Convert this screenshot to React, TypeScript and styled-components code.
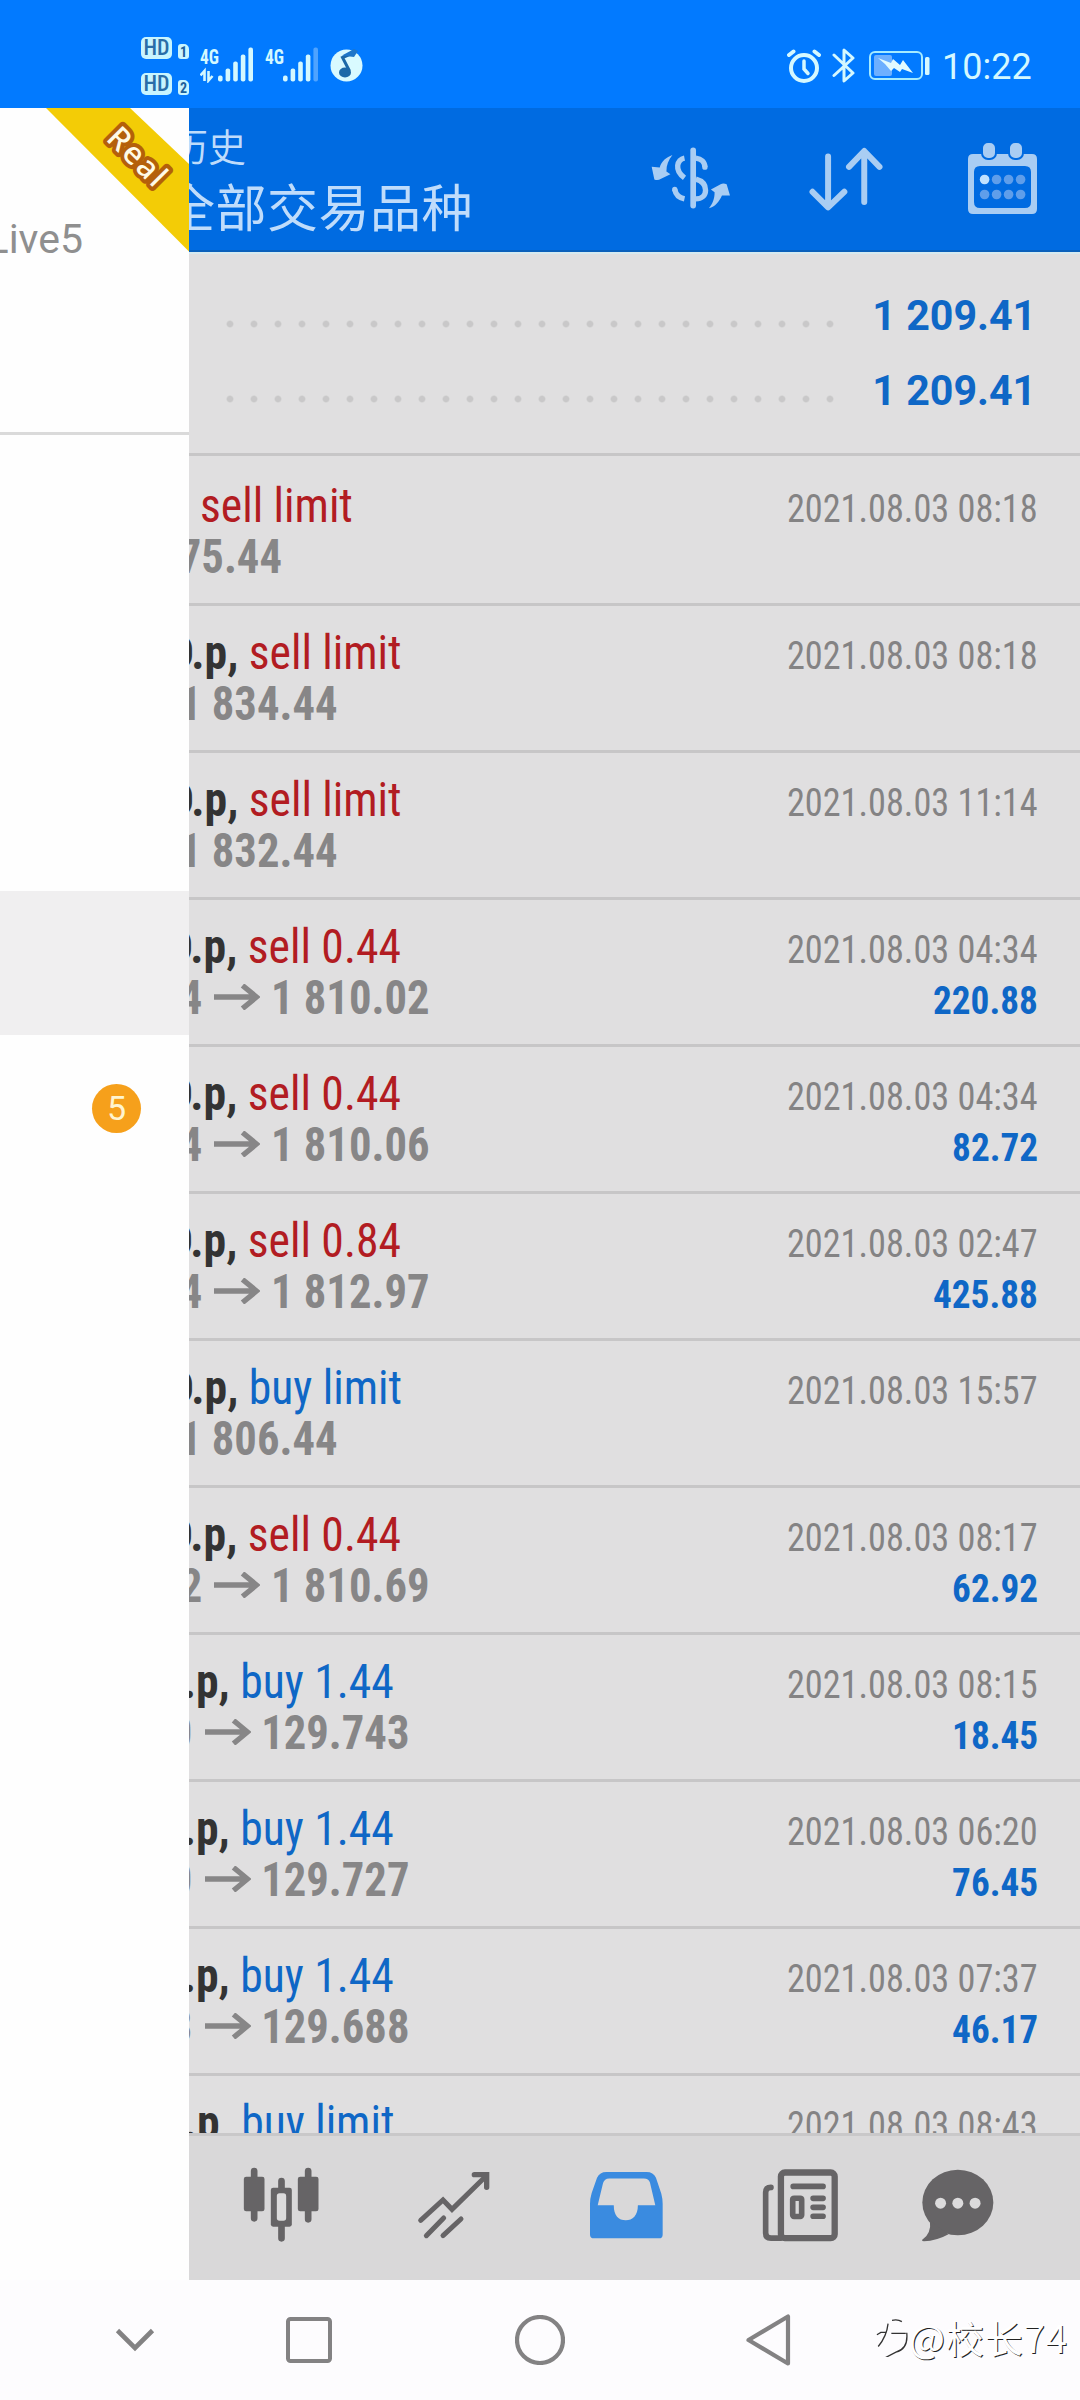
import React from "react";
import styled, { createGlobalStyle } from "styled-components";

const roboto = `Roboto, "Noto Sans CJK SC", sans-serif`;
const condensed = `"Roboto Condensed", Roboto, "Noto Sans CJK SC", sans-serif`;
const cjk = `"Noto Sans CJK SC", sans-serif`;

const RED = "#b21c22";
const BLUE = "#0f67c6";

const GlobalStyle = createGlobalStyle`
  * { box-sizing: border-box; }
  body { margin: 0; background: #fdfcfe; }
  svg { display: block; flex: none; }
`;

const Phone = styled.div`
  width: 1080px;
  height: 2400px;
  display: flex;
  flex-direction: column;
  overflow: hidden;
  font-family: ${roboto};
`;

/* ---------- status bar ---------- */

const StatusBar = styled.div`
  height: 108px;
  padding: 37px 48px 0 141px;
  display: flex;
  align-items: flex-start;
  background: #027aff;
  color: #d4f8ff;
`;

const SimStack = styled.div`
  display: flex;
  flex-direction: column;
  gap: 14px;
  width: 48px;
`;

const SimRow = styled.div`
  display: flex;
  justify-content: space-between;
  align-items: flex-end;
  height: 22px;
`;

const HdBadge = styled.span`
  width: 31px;
  height: 22px;
  border-radius: 5px;
  background: #c8f5ff;
  color: #2a6ea8;
  font: 500 22px/22px ${condensed};
  text-align: center;
`;

const SimBadge = styled.span`
  width: 11px;
  height: 15px;
  border-radius: 3px 5px 3px 3px;
  background: #c8f5ff;
  color: #1b5f9c;
  font: 700 14px/16px ${condensed};
  text-align: center;
`;

const StatusIcon = styled.div<{ $top: number; $left: number }>`
  margin: ${(p) => p.$top}px 0 0 ${(p) => p.$left}px;
`;

const Clock = styled.span`
  margin-left: 12px;
  padding-top: 9px;
  width: 90px;
  font-size: 36px;
  line-height: 42px;
  white-space: nowrap;
`;

const Push = styled.div`
  flex: 1;
`;

/* ---------- body ---------- */

const Body = styled.div`
  display: flex;
  height: 2172px;
`;

const Drawer = styled.aside`
  width: 189px;
  background: #fefefe;
  display: flex;
  flex-direction: column;
`;

const DrawerHeader = styled.div`
  position: relative;
  height: 327px;
  border-bottom: 3px solid #dadada;
  padding-top: 107px;
  overflow: hidden;
`;

const Server = styled.div`
  display: flex;
  justify-content: flex-end;
  width: 83px;
  color: #8f8f8f;
  font-size: 41px;
  line-height: 48px;
`;

const Ribbon = styled.svg`
  position: absolute;
  top: 0;
  left: 0;
`;

const RibbonText = styled.text`
  font: 500 31px "Noto Sans", sans-serif;
  letter-spacing: 2px;
  fill: #fffbe6;
  stroke: #b4600a;
  stroke-width: 8px;
  stroke-linejoin: round;
  paint-order: stroke;
`;

const DrawerMenu = styled.div`
  display: flex;
  flex-direction: column;
  padding-top: 456px;
`;

const DrawerItem = styled.div<{ $active?: boolean }>`
  height: ${(p) => (p.$active ? 144 : 146)}px;
  padding-right: 48px;
  display: flex;
  align-items: center;
  justify-content: flex-end;
  background: ${(p) => (p.$active ? "#f0eff0" : "transparent")};
`;

const Badge = styled.span`
  width: 49px;
  height: 49px;
  border-radius: 50%;
  background: #f6a01b;
  color: #fff4cf;
  font-size: 34px;
  line-height: 49px;
  text-align: center;
`;

const Main = styled.main`
  width: 891px;
  display: flex;
  flex-direction: column;
  overflow: hidden;
  background: #e0dfe0;
`;

const Header = styled.header`
  height: 144px;
  padding: 14px 42px 0 0;
  display: flex;
  justify-content: space-between;
  background: #006be1;
  border-bottom: 2px solid #0b60bb;
`;

const Titles = styled.div`
  flex: 1;
  color: #bfdcfb;
  white-space: nowrap;
`;

const Subtitle = styled.div`
  margin-left: -19px;
  font: 350 38px/46px ${cjk};
`;

const Title = styled.div`
  margin-left: -25px;
  padding-top: 4px;
  font: 400 51px/66px ${cjk};
  letter-spacing: 0.5px;
`;

const HeaderIcon = styled.div<{ $gap: number; $top: number }>`
  margin: ${(p) => p.$top}px ${(p) => p.$gap}px 0 0;
`;

const Summary = styled.section`
  height: 201px;
  padding: 24px 0 0 29px;
  border-top: 2px solid #d7eaf0;
`;

const SummaryLine = styled.div`
  height: 75px;
  padding-right: 44px;
  display: flex;
  justify-content: space-between;
`;

const Leader = styled.div`
  width: 624px;
  background: radial-gradient(circle at 12px 12px, #c9c8c9 2.6px, transparent 4px) 0 34px / 24px 75px repeat-x;
`;

const Total = styled.span`
  color: ${BLUE};
  font: 700 42px/75px ${roboto};
  transform: scaleX(0.98);
  transform-origin: right;
  white-space: nowrap;
`;

const List = styled.section`
  flex: 1;
  overflow: hidden;
`;

const Row = styled.div<{ $first?: boolean }>`
  height: ${(p) => (p.$first ? 150 : 147)}px;
  padding-top: ${(p) => (p.$first ? 24 : 21)}px;
  border-top: 3px solid #c7c6c7;
`;

const Line = styled.div`
  height: 51px;
  padding-right: 42px;
  display: flex;
  justify-content: space-between;
  align-items: baseline;
  line-height: 51px;
  white-space: pre;
`;

const Cell = styled.div<{ $w: number; $bold?: boolean }>`
  width: ${(p) => p.$w}px;
  display: flex;
  justify-content: flex-end;
  align-items: baseline;
  font-family: ${condensed};
  font-size: 48px;
  font-weight: ${(p) => (p.$bold ? 700 : 450)};
  color: ${(p) => (p.$bold ? "#878687" : "#333")};
`;

const Squeeze = styled.span<{ $x: number; $color?: string }>`
  transform: scaleX(${(p) => p.$x});
  transform-origin: right;
  ${(p) => p.$color && `color: ${p.$color};`}
  b { color: #333; font-weight: 700; }
`;

const ArrowIcon = styled.svg`
  margin: 0 -1px 0 12px;
  padding-bottom: 4px;
`;

const DateText = styled.span`
  color: #848384;
  font: 450 39px/51px ${condensed};
  transform: scaleX(0.93);
  transform-origin: right;
`;

const Profit = styled.span`
  color: ${BLUE};
  font: 700 39px/51px ${condensed};
  transform: scaleX(0.955);
  transform-origin: right;
`;

const TabBar = styled.nav`
  height: 147px;
  padding: 0 0 6px 6px;
  border-top: 3px solid #c9c8c9;
  display: flex;
  background: #d9d8d9;
`;

const Tab = styled.div<{ $w: number }>`
  width: ${(p) => p.$w}px;
  display: flex;
  align-items: center;
  justify-content: center;
`;

/* ---------- system navigation ---------- */

const NavBar = styled.div`
  height: 120px;
  padding: 0 10px 0 115px;
  display: flex;
  align-items: center;
  background: #fdfcfe;
`;

const NavIcon = styled.div<{ $gap: number }>`
  margin-right: ${(p) => p.$gap}px;
`;

const Watermark = styled.div`
  display: flex;
  align-items: center;
  gap: 1px;
  color: #fff;
  font: 400 38px/46px ${cjk};
  letter-spacing: 0.9px;
  text-shadow: 1px 1px 0 #222;
  white-space: nowrap;
  padding-bottom: 7px;
`;

const Arrow = () => (
  <ArrowIcon width="46" height="30" viewBox="0 0 46 26">
    <path d="M0 13H42M28.500 1.5 42.500 13 28.500 24.5" fill="none" stroke="#878687" strokeWidth="5.400" />
  </ArrowIcon>
);

function Signal({ data, dim }: { data?: boolean; dim?: boolean }) {
  return (
    <svg width="54" height="36" viewBox="0 0 54 36">
      <text x="0" y="16.5" fontFamily={condensed} fontWeight="700" fontSize="21" fill="#d4f8ff" textLength="19" lengthAdjust="spacingAndGlyphs">4G</text>
      {data && <path d="M4.500 34V24L0.500 28.500M8.500 24V33.500L12.500 29" stroke="#d4f8ff" strokeWidth="2.600" fill="none" />}
      {[6, 13, 20, 27, 34].map((h, i) => (
        <rect key={i} x={18 + i * 7.6} y={34.5 - h} width="4.600" height={h} rx="2" fill={dim && i === 4 ? "#4fa3ff" : "#d4f8ff"} />
      ))}
    </svg>
  );
}

interface Deal {
  symbol: string;
  side: string;
  color: string;
  w1: number;
  from: string;
  to?: string;
  w2: number;
  date: string;
  profit?: string;
}

const deals: Deal[] = [
  { symbol: "", side: "sell limit", color: RED, w1: 164, from: "75.44", w2: 93, date: "2021.08.03 08:18" },
  { symbol: "D.p,", side: "sell limit", color: RED, w1: 213, from: "1 834.44", w2: 149, date: "2021.08.03 08:18" },
  { symbol: "D.p,", side: "sell limit", color: RED, w1: 213, from: "1 832.44", w2: 149, date: "2021.08.03 11:14" },
  { symbol: "D.p,", side: "sell 0.44", color: RED, w1: 212, from: "4", to: "1 810.02", w2: 241, date: "2021.08.03 04:34", profit: "220.88" },
  { symbol: "D.p,", side: "sell 0.44", color: RED, w1: 212, from: "4", to: "1 810.06", w2: 241, date: "2021.08.03 04:34", profit: "82.72" },
  { symbol: "D.p,", side: "sell 0.84", color: RED, w1: 212, from: "4", to: "1 812.97", w2: 241, date: "2021.08.03 02:47", profit: "425.88" },
  { symbol: "D.p,", side: "buy limit", color: BLUE, w1: 213, from: "1 806.44", w2: 149, date: "2021.08.03 15:57" },
  { symbol: "D.p,", side: "sell 0.44", color: RED, w1: 212, from: "2", to: "1 810.69", w2: 241, date: "2021.08.03 08:17", profit: "62.92" },
  { symbol: "Y.p,", side: "buy 1.44", color: BLUE, w1: 205, from: "0", to: "129.743", w2: 220, date: "2021.08.03 08:15", profit: "18.45" },
  { symbol: "Y.p,", side: "buy 1.44", color: BLUE, w1: 205, from: "0", to: "129.727", w2: 220, date: "2021.08.03 06:20", profit: "76.45" },
  { symbol: "Y.p,", side: "buy 1.44", color: BLUE, w1: 205, from: "3", to: "129.688", w2: 220, date: "2021.08.03 07:37", profit: "46.17" },
  { symbol: "Y.p,", side: "buy limit", color: BLUE, w1: 205, from: "", w2: 220, date: "2021.08.03 08:43" },
];

const ICON = "#666466";
const HEAD = "#a9cdf3";

export default function App() {
  return (
    <Phone>
      <GlobalStyle />
      <StatusBar>
        <SimStack>
          {["1", "2"].map((n) => (
            <SimRow key={n}>
              <HdBadge>HD</HdBadge>
              <SimBadge>{n}</SimBadge>
            </SimRow>
          ))}
        </SimStack>
        <StatusIcon $top={10} $left={11}><Signal data /></StatusIcon>
        <StatusIcon $top={10} $left={11}><Signal dim /></StatusIcon>
        <StatusIcon $top={12} $left={11}>
          <svg width="33" height="33" viewBox="0 0 33 33">
            <circle cx="16.500" cy="16.500" r="16" fill="#d9faff" />
            <ellipse cx="15" cy="23.500" rx="6" ry="5" fill="#1c69a8" />
            <path d="M24 3.500 12.500 8.500 19.500 22" fill="none" stroke="#1c69a8" strokeWidth="3" />
            <path d="M12 6.500 24 0 28 2 24 8Z" fill="#1f76c8" />
          </svg>
        </StatusIcon>
        <Push />
        <StatusIcon $top={12} $left={0}>
          <svg width="34" height="35" viewBox="0 0 34 35" fill="none" stroke="#d4f8ff" strokeLinecap="round">
            <circle cx="17" cy="19" r="13" strokeWidth="4" />
            <path d="M17 12V20L21 24.500" strokeWidth="3.500" />
            <path d="M2 6 6.500 2.500M32 6 27.500 2.500" strokeWidth="4" />
          </svg>
        </StatusIcon>
        <StatusIcon $top={10} $left={11}>
          <svg width="24" height="37" viewBox="0 0 24 37" fill="none" stroke="#d4f8ff" strokeWidth="3" strokeLinejoin="round">
            <path d="M2 8 21 26 12 34V3L21 11 2 28.500" strokeLinecap="round" />
          </svg>
        </StatusIcon>
        <StatusIcon $top={13} $left={13}>
          <svg width="61" height="32" viewBox="0 0 61 32">
            <rect x="1" y="2" width="52" height="27" rx="5" fill="none" stroke="#a5ebff" strokeWidth="2" />
            <rect x="5" y="5" width="18" height="21" rx="2" fill="#6db0ff" />
            <path d="M9 8 22 13 24 9 31 15 34 10 44 23 33 19 31 22 25 18 22 21 16 14Z" fill="#e2fbff" />
            <rect x="56" y="7" width="4.500" height="18" rx="1.500" fill="#d4f8ff" />
          </svg>
        </StatusIcon>
        <Clock>10:22</Clock>
      </StatusBar>

      <Body>
        <Drawer>
          <DrawerHeader>
            <Server>Live5</Server>
            <Ribbon width="189" height="144" viewBox="0 0 189 144">
              <path d="M46 0H130L189 56V143.500Z" fill="#f3cc06" />
              <RibbonText transform="translate(105 31.500) rotate(45)">Real</RibbonText>
            </Ribbon>
          </DrawerHeader>
          <DrawerMenu>
            <DrawerItem $active />
            <DrawerItem><Badge>5</Badge></DrawerItem>
          </DrawerMenu>
        </Drawer>

        <Main>
          <Header>
            <Titles>
              <Subtitle>历史</Subtitle>
              <Title>全部交易品种</Title>
            </Titles>
            <HeaderIcon $top={23} $gap={73}>
              <svg width="87" height="67" viewBox="20 45 260 200" fill="none" stroke={HEAD} strokeWidth="16">
                <path d="M158 61V226" strokeWidth="17" strokeLinecap="round" />
                <path d="M132 84C110 88 100 120 132 143" />
                <path d="M103 178C106 195 118 203 132 206" />
                <path d="M103 178v.1M193 111v.1" strokeLinecap="round" />
                <path d="M166 84C182 86 193 96 193 111" />
                <path d="M166 147C184 152 195 163 195 180C195 196 183 206 166 206" />
                <path d="M96 75C78 82 64 92 58 112L34 110 42 148Q52 152 62 146L90 132 78 124C78 105 84 90 96 75Z" fill={HEAD} stroke="none" />
                <path d="M205 234C224 230 236 214 244 196L268 196 258 162Q248 158 240 162L211 178 222 186C222 206 216 220 205 234Z" fill={HEAD} stroke="none" />
              </svg>
            </HeaderIcon>
            <HeaderIcon $top={23} $gap={80}>
              <svg width="80" height="68" viewBox="500 45 240 205" fill="none" stroke={HEAD} strokeWidth="18" strokeLinecap="round" strokeLinejoin="round">
                <path d="M563 80V232M516 186 563 233 612 186M672 64V217M626 111 672 63 718 111" />
              </svg>
            </HeaderIcon>
            <HeaderIcon $top={20} $gap={0}>
              <svg width="71" height="73" viewBox="967 142 71 73">
                <path fillRule="evenodd" fill={HEAD} d="M973 154H1032Q1037 154 1037 159V209Q1037 214 1032 214H973Q968 214 968 209V159Q968 154 973 154ZM980 166Q974 166 974 172V202Q974 208 980 208H1025Q1031 208 1031 202V172Q1031 166 1025 166Z" />
                {[983, 1010].map((x) => (
                  <rect key={x} x={x - 1} y="142" width="14" height="17" rx="6" fill={HEAD} stroke="#006be1" strokeWidth="2" />
                ))}
                {[0, 1, 2, 3, 4, 5, 6, 7].map((i) => (
                  <circle key={i} cx={984.6 + (i % 4) * 12} cy={i < 4 ? 179.5 : 194.5} r="4.800" fill={i ? "#5f9eea" : "#c0e2ff"} />
                ))}
              </svg>
            </HeaderIcon>
          </Header>

          <Summary>
            <SummaryLine><Leader /><Total>1 209.41</Total></SummaryLine>
            <SummaryLine><Leader /><Total>1 209.41</Total></SummaryLine>
          </Summary>

          <List>
            {deals.map((d, i) => (
              <Row key={i} $first={i === 0}>
                <Line>
                  <Cell $w={d.w1}>
                    <Squeeze $x={0.95} $color={d.color}><b>{d.symbol}</b> {d.side}</Squeeze>
                  </Cell>
                  <DateText>{d.date}</DateText>
                </Line>
                <Line>
                  <Cell $w={d.w2} $bold>
                    {d.to ? (
                      <>
                        <Squeeze $x={0.93}>{d.from}</Squeeze>
                        <Arrow />
                        <Squeeze $x={0.93}>{d.to}</Squeeze>
                      </>
                    ) : (
                      <Squeeze $x={0.93}>{d.from}</Squeeze>
                    )}
                  </Cell>
                  {d.profit && <Profit>{d.profit}</Profit>}
                </Line>
              </Row>
            ))}
          </List>

          <TabBar>
            <Tab $w={173}>
              <svg width="77" height="76" viewBox="190 145 230 228" fill={ICON} stroke={ICON} strokeLinecap="round">
                <path d="M223 157V299M305 187V212M305 318V359M385 157V302" strokeWidth="20" />
                <rect x="192" y="174" width="62" height="104" rx="7" stroke="none" />
                <rect x="354" y="174" width="62" height="104" rx="7" stroke="none" />
                <rect x="273" y="207" width="63" height="117" rx="7" stroke="none" />
                <rect x="291" y="224" width="28" height="82" rx="8" fill="#dcdbdc" stroke="none" />
              </svg>
            </Tab>
            <Tab $w={172}>
              <svg width="74" height="70" viewBox="710 150 222 210" fill="none" stroke={ICON} strokeWidth="15" strokeLinecap="round">
                <path d="M721 301 788 240 815 268 915 170M738 347 790 294M788 347 842 297" />
                <path d="M882 164H919V202" strokeWidth="16" />
              </svg>
            </Tab>
            <Tab $w={173}>
              <svg width="75" height="69" viewBox="1228 152 224 206" fill="#3a8be0">
                <path fillRule="evenodd" d="M1280 155H1400Q1420 155 1428 172L1444 220Q1448 235 1448 250V342Q1448 353 1437 353H1243Q1231 353 1231 342V250Q1231 235 1236 218L1252 172Q1260 155 1280 155ZM1288 174H1392Q1406 174 1410 186L1426 254H1374C1374 285 1358 299 1338 299C1316 299 1302 285 1302 254H1254L1270 188Q1274 174 1288 174Z" />
              </svg>
            </Tab>
            <Tab $w={174}>
              <svg width="77" height="74" viewBox="395 143 232 222" fill="none" stroke={ICON} strokeWidth="17" strokeLinecap="round">
                <rect x="452" y="156" width="162" height="198" rx="12" strokeWidth="19" />
                <path d="M422 201Q406 201 406 217V338Q406 354 422 354H450M489 198H579M549 234H579M549 261H579M549 288H579" />
                <rect x="487.500" y="233.500" width="27" height="55" rx="4" />
              </svg>
            </Tab>
            <Tab $w={141}>
              <svg width="75" height="75" viewBox="870 143 226 224" fill={ICON}>
                <ellipse cx="984" cy="246" rx="107" ry="99" />
                <path d="M900 300Q905 340 876 359Q876 363 882 363Q920 362 956 342Z" />
                {[932, 984, 1036].map((x) => <circle key={x} cx={x} cy="248" r="16.500" fill="#dcdbdc" />)}
              </svg>
            </Tab>
          </TabBar>
        </Main>
      </Body>

      <NavBar>
        <NavIcon $gap={131}>
          <svg width="40" height="26" viewBox="0 0 40 26"><path d="M2.500 3.500 20 21 37.500 3.500" fill="none" stroke="#838283" strokeWidth="4.600" /></svg>
        </NavIcon>
        <NavIcon $gap={183}>
          <svg width="46" height="46" viewBox="0 0 46 46"><rect x="2" y="2" width="42" height="42" rx="2.500" fill="none" stroke="#838283" strokeWidth="4" /></svg>
        </NavIcon>
        <NavIcon $gap={181}>
          <svg width="50" height="50" viewBox="0 0 50 50"><circle cx="25" cy="25" r="23" fill="none" stroke="#838283" strokeWidth="4.200" /></svg>
        </NavIcon>
        <NavIcon $gap={85}>
          <svg width="45" height="52" viewBox="0 0 45 52"><path d="M42 2.500V49.500L2.500 26Z" fill="none" stroke="#838283" strokeWidth="4.200" strokeLinejoin="round" /></svg>
        </NavIcon>
        <Watermark>
          <svg width="32" height="40" viewBox="740 602 96 122" fill="none" stroke="#333" strokeWidth="4">
            <path d="M788 612Q806 608 818 616M776 622Q772 660 746 692M742 656 754 649H772M786 652H830M833 650Q838 700 800 709L764 728" />
          </svg>
          <span>@校长74</span>
        </Watermark>
      </NavBar>
    </Phone>
  );
}
